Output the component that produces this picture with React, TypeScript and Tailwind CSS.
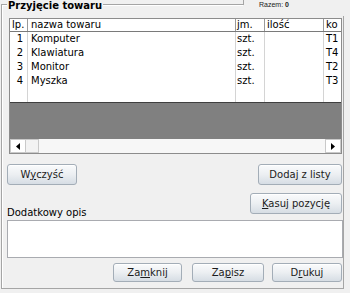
import React from 'react';

type Row = { lp: number; nazwa: string; jm: string; kod: string };

const ROWS: Row[] = [
  { lp: 1, nazwa: 'Komputer', jm: 'szt.', kod: 'T1' },
  { lp: 2, nazwa: 'Klawiatura', jm: 'szt.', kod: 'T4' },
  { lp: 3, nazwa: 'Monitor', jm: 'szt.', kod: 'T2' },
  { lp: 4, nazwa: 'Myszka', jm: 'szt.', kod: 'T3' },
];

/* Windows-7 style push button with a soft vertical gradient. */
function WinButton({ children, className = '' }: { children: React.ReactNode; className?: string }) {
  return (
    <button
      type="button"
      className={`flex shrink-0 items-center justify-center rounded-[3px] border border-[#a3adb7] bg-linear-to-b from-[#fafbfc] via-[#eceff2] to-[#d6dde4] text-[10px] leading-none text-[#1b1b1b] shadow-[inset_0_1px_0_#ffffff] ${className}`}
    >
      {children}
    </button>
  );
}

function Arrow({ dir }: { dir: 'left' | 'right' }) {
  return (
    <svg width="4" height="7" viewBox="0 0 4 7" aria-hidden="true">
      {dir === 'left' ? <path d="M4 0 L0 3.5 L4 7 Z" fill="#000" /> : <path d="M0 0 L4 3.5 L0 7 Z" fill="#000" />}
    </svg>
  );
}

const cols = 'grid grid-cols-[18px_208px_29px_59px_17px]';

export default function App() {
  return (
    <div className="relative h-[293px] w-[350px] overflow-hidden bg-[#f0f0f0] font-['DejaVu_Sans',sans-serif] text-black">
      {/* group box */}
      <div className="ml-[1px] mt-[4px] h-[285px] w-[343px] border border-[#a5a5a5] shadow-[inset_1px_1px_0_#ffffff]">
        {/* grid */}
        <div className="ml-[7px] mt-[13px] w-[333px] border border-[#8c8c8c] bg-white text-[10px]">
          <div className={`${cols} h-[13px] border-b border-[#7a7a7a] leading-[12px]`}>
            <div className="border-r border-[#9a9a9a] pl-[2px]">lp.</div>
            <div className="border-r border-[#9a9a9a] pl-[3px]">nazwa towaru</div>
            <div className="border-r border-[#9a9a9a] pl-[1px]">jm.</div>
            <div className="border-r border-[#9a9a9a] pl-[2px]">ilość</div>
            <div className="overflow-hidden whitespace-nowrap pl-[2px]">ko</div>
          </div>
          {[...ROWS, null].map((r, i) => (
            <div key={i} className={`${cols} h-[14px] leading-[14px]`}>
              <div className="border-r border-[#d4d4d4] pr-[4px] text-right">{r?.lp}</div>
              <div className="border-r border-[#d4d4d4] pl-[3px]">{r?.nazwa}</div>
              <div className="border-r border-[#d4d4d4] pl-[1px]">{r?.jm}</div>
              <div className="border-r border-[#d4d4d4]"></div>
              <div className="overflow-hidden whitespace-nowrap pl-[2px]">{r?.kod}</div>
            </div>
          ))}
          <div className="h-[37px] border-t border-[#3f3f3f] bg-[#808080]" />
          <div className="flex h-[14px] bg-[#f7f7f7]">
            <div className="flex w-[16px] items-center justify-center border border-[#c9c9c9] bg-white">
              <Arrow dir="left" />
            </div>
            <div className="w-[13px] border border-l-0 border-[#c9c9c9] bg-[#f3f3f3]" />
            <div className="flex-1" />
            <div className="flex w-[16px] items-center justify-center border border-[#c9c9c9] bg-white">
              <Arrow dir="right" />
            </div>
          </div>
        </div>

        <div className="mt-[10px] flex justify-between">
          <WinButton className="ml-[5px] h-[21px] w-[70px]">
            <span>
              W<span className="underline">y</span>czyść
            </span>
          </WinButton>
          <WinButton className="mr-[1px] h-[21px] w-[84px]">Dodaj z listy</WinButton>
        </div>

        <div className="mt-[8px] flex items-start justify-between">
          <div className="ml-[5px] mt-[14px] h-[12px] text-[10px] leading-[12px]">Dodatkowy opis</div>
          <WinButton className="mr-[1px] h-[21px] w-[92px]">
            <span>
              <span className="underline">K</span>asuj pozycję
            </span>
          </WinButton>
        </div>

        <div className="ml-[5px] mt-[1px] h-[38px] w-[336px] border border-[#a9abb0] bg-white" />

        <div className="mt-[5px] flex justify-end">
          <WinButton className="h-[19px] w-[69px]">
            <span>
              Za<span className="underline">m</span>knij
            </span>
          </WinButton>
          <WinButton className="ml-[10px] h-[19px] w-[72px]">
            <span>
              Za<span className="underline">p</span>isz
            </span>
          </WinButton>
          <WinButton className="ml-[8px] mr-[1px] h-[19px] w-[70px]">
            <span>
              D<span className="underline">r</span>ukuj
            </span>
          </WinButton>
        </div>
      </div>

      {/* group title sits on the top border */}
      <div className="absolute left-[7px] top-0 bg-[#f0f0f0] px-[1px] text-[10px] font-bold leading-[11px]">
        Przyjęcie towaru
      </div>

      {/* total panel over the top-right corner */}
      <div className="absolute left-[243px] top-0 flex h-[16px] w-[107px] items-start bg-[#f0f0f0]">
        <div className="h-[5px] border-l border-[#a5a5a5]" />
        <div className="ml-[15px] mt-[1px] font-['Liberation_Sans',sans-serif] text-[7px] leading-[8px] text-[#222]">
          Razem: <span className="font-bold">0</span>
        </div>
      </div>
    </div>
  );
}
